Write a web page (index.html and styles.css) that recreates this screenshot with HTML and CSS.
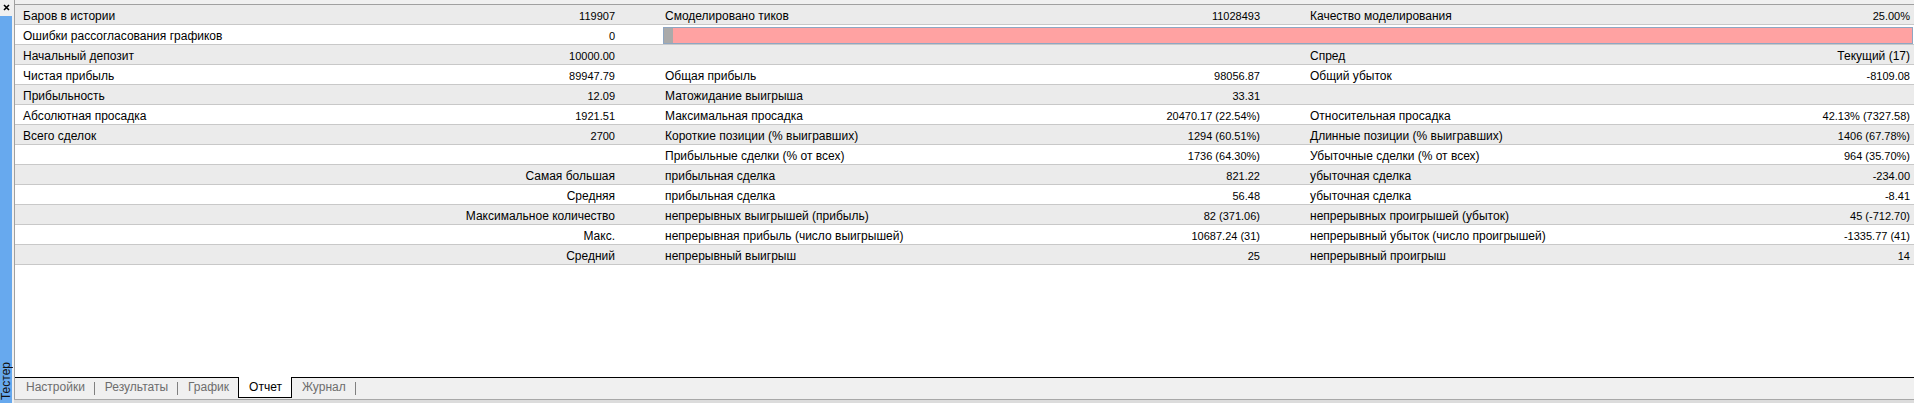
FILE: index.html
```html
<!DOCTYPE html>
<html lang="ru">
<head>
    <meta charset="UTF-8">
    <meta name="viewport" content="width=device-width, initial-scale=1.0">
    <title>Тестер - Отчет</title>
    <link rel="stylesheet" href="styles.css">
</head>
<body>
    <div class="window">
        <div class="side">
            <div class="close">
                <svg width="7" height="7" viewBox="0 0 7 7">
                    <path d="M1 1 L6 6 M6 1 L1 6" stroke="#000" stroke-width="1.6"/>
                </svg>
            </div>
            <div class="side-tab"><span>Тестер</span></div>
        </div>

        <div class="main">
            <div class="report">
                <div class="row">
                    <div class="cell"><span>Баров в истории</span><span class="num">119907</span></div>
                    <div class="cell"><span>Смоделировано тиков</span><span class="num">11028493</span></div>
                    <div class="cell"><span>Качество моделирования</span><span class="num">25.00%</span></div>
                </div>
                <div class="row">
                    <div class="cell"><span>Ошибки рассогласования графиков</span><span class="num">0</span></div>
                    <div class="quality-bar"><div class="quality-fill"></div></div>
                </div>
                <div class="row">
                    <div class="cell"><span>Начальный депозит</span><span class="num">10000.00</span></div>
                    <div class="cell"></div>
                    <div class="cell"><span>Спред</span><span>Текущий (17)</span></div>
                </div>
                <div class="row">
                    <div class="cell"><span>Чистая прибыль</span><span class="num">89947.79</span></div>
                    <div class="cell"><span>Общая прибыль</span><span class="num">98056.87</span></div>
                    <div class="cell"><span>Общий убыток</span><span class="num">-8109.08</span></div>
                </div>
                <div class="row">
                    <div class="cell"><span>Прибыльность</span><span class="num">12.09</span></div>
                    <div class="cell"><span>Матожидание выигрыша</span><span class="num">33.31</span></div>
                    <div class="cell"></div>
                </div>
                <div class="row">
                    <div class="cell"><span>Абсолютная просадка</span><span class="num">1921.51</span></div>
                    <div class="cell"><span>Максимальная просадка</span><span class="num">20470.17 (22.54%)</span></div>
                    <div class="cell"><span>Относительная просадка</span><span class="num">42.13% (7327.58)</span></div>
                </div>
                <div class="row">
                    <div class="cell"><span>Всего сделок</span><span class="num">2700</span></div>
                    <div class="cell"><span>Короткие позиции (% выигравших)</span><span class="num">1294 (60.51%)</span></div>
                    <div class="cell"><span>Длинные позиции (% выигравших)</span><span class="num">1406 (67.78%)</span></div>
                </div>
                <div class="row">
                    <div class="cell"></div>
                    <div class="cell"><span>Прибыльные сделки (% от всех)</span><span class="num">1736 (64.30%)</span></div>
                    <div class="cell"><span>Убыточные сделки (% от всех)</span><span class="num">964 (35.70%)</span></div>
                </div>
                <div class="row">
                    <div class="cell right"><span>Самая большая</span></div>
                    <div class="cell"><span>прибыльная сделка</span><span class="num">821.22</span></div>
                    <div class="cell"><span>убыточная сделка</span><span class="num">-234.00</span></div>
                </div>
                <div class="row">
                    <div class="cell right"><span>Средняя</span></div>
                    <div class="cell"><span>прибыльная сделка</span><span class="num">56.48</span></div>
                    <div class="cell"><span>убыточная сделка</span><span class="num">-8.41</span></div>
                </div>
                <div class="row">
                    <div class="cell right"><span>Максимальное количество</span></div>
                    <div class="cell"><span>непрерывных выигрышей (прибыль)</span><span class="num">82 (371.06)</span></div>
                    <div class="cell"><span>непрерывных проигрышей (убыток)</span><span class="num">45 (-712.70)</span></div>
                </div>
                <div class="row">
                    <div class="cell right"><span>Макс.</span></div>
                    <div class="cell"><span>непрерывная прибыль (число выигрышей)</span><span class="num">10687.24 (31)</span></div>
                    <div class="cell"><span>непрерывный убыток (число проигрышей)</span><span class="num">-1335.77 (41)</span></div>
                </div>
                <div class="row">
                    <div class="cell right"><span>Средний</span></div>
                    <div class="cell"><span>непрерывный выигрыш</span><span class="num">25</span></div>
                    <div class="cell"><span>непрерывный проигрыш</span><span class="num">14</span></div>
                </div>
            </div>

            <div class="tabs">
                <div class="tab">Настройки</div>
                <div class="sep"></div>
                <div class="tab">Результаты</div>
                <div class="sep"></div>
                <div class="tab">График</div>
                <div class="tab active">Отчет</div>
                <div class="tab">Журнал</div>
                <div class="sep"></div>
            </div>
            <div class="frame-bottom"></div>
        </div>
    </div>
</body>
</html>
```

FILE: styles.css
```css
* {
    box-sizing: border-box;
}

body {
    margin: 0;
    padding: 0;
    width: 1914px;
    height: 403px;
    overflow: hidden;
    background-color: #f0f0f0;
    font-family: "Liberation Sans", Arial, sans-serif;
    font-size: 12px;
    color: #000;
}

.window {
    display: flex;
    height: 403px;
}

/* left vertical panel strip */
.side {
    width: 12px;
    display: flex;
    flex-direction: column;
}

.close {
    height: 16px;
    display: flex;
    justify-content: center;
    align-items: center;
    padding-bottom: 2px;
}

.side-tab {
    flex: 1;
    background-color: #67a9ee;
    display: flex;
    align-items: flex-end;
    justify-content: center;
}

.side-tab span {
    writing-mode: vertical-rl;
    transform: rotate(180deg);
    font-size: 12px;
    line-height: 12px;
    color: #111;
    padding-top: 3px;
}

.main {
    flex: 1;
    margin-left: 2px;
    padding-top: 4px;
    display: flex;
    flex-direction: column;
    border-left: 1px solid #a0a0a0;
}

.report {
    flex: 1;
    background-color: #fff;
    border-top: 1px solid #a0a0a0;
}

.row {
    display: grid;
    grid-template-columns: 592px 595px 1fr;
    column-gap: 50px;
    padding: 3px 4px 0 8px;
    height: 20px;
    line-height: 17px;
    border-bottom: 1px solid #c8c8c8;
    white-space: nowrap;
}

.row:nth-child(odd) {
    background-color: #ebebeb;
}

.cell {
    display: flex;
    justify-content: space-between;
}

.cell.right {
    justify-content: flex-end;
}

.num {
    font-size: 11px;
}

.quality-bar {
    grid-column: 2 / 4;
    align-self: start;
    margin: -1px -3px 0 -2px;
    height: 17px;
    border: 1px solid #8ea6c2;
    background-color: #ffa2a2;
}

.quality-fill {
    width: 9px;
    height: 100%;
    background-color: #aaaaaa;
}

/* bottom tab strip */
.tabs {
    height: 22px;
    display: flex;
    align-items: flex-start;
    padding-left: 1px;
    border-top: 1px solid #000;
    background-color: #f0f0f0;
}

.tab {
    padding: 0 9px 0 10px;
    height: 20px;
    line-height: 19px;
    color: #6d6d6d;
}

.tab.active {
    margin-top: -1px;
    height: 21px;
    color: #000;
    background-color: #fff;
    border: 1px solid #000;
    border-top: none;
    line-height: 20px;
}

.sep {
    width: 1px;
    height: 13px;
    margin-top: 4px;
    background-color: #808080;
}

.frame-bottom {
    height: 4px;
    border-top: 1px solid #a8a8a8;
    background-color: #dcdcdc;
    margin-left: -1px;
}
```
